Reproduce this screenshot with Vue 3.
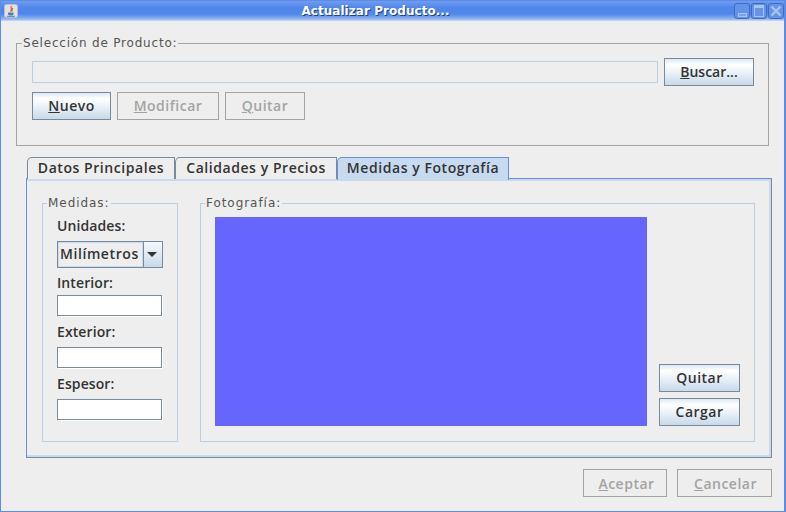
<template>
  <div class="window">
    <header class="titlebar">
      <span class="app-icon">
        <svg width="14" height="14" viewBox="0 0 14 14">
          <rect x="0.5" y="0.5" width="13" height="13" rx="2" fill="#e4e2de" stroke="#b5c0d8" />
          <path d="M7.5 2 C5.5 4 9 5 6.5 7.5 M9 4 C7.5 5 8.5 6 8 7.5" fill="none" stroke="#d9542b" stroke-width="1.1" />
          <path d="M4 8.5 H9.5 V10.5 Q9 11.5 7 11.5 Q4.5 11.5 4 10.5 Z" fill="#4d7ea8" />
          <path d="M3 12.3 H11" stroke="#4d7ea8" />
        </svg>
      </span>
      <h1>Actualizar Producto...</h1>
      <div class="window-buttons">
        <span class="win-btn"><i class="min"></i></span>
        <span class="win-btn"><i class="max"></i></span>
        <span class="win-btn">
          <svg width="12" height="12" viewBox="0 0 12 12">
            <path d="M1.5 1.5 L10.5 10.5 M10.5 1.5 L1.5 10.5" stroke="#a9c3f0" stroke-width="2.4" fill="none" />
          </svg>
        </span>
      </div>
    </header>

    <main class="content">
      <fieldset class="product-box">
        <legend>Selección de Producto:</legend>
        <div class="search-row">
          <div class="search-input"></div>
          <button type="button" class="btn search-btn"><u>B</u>uscar...</button>
        </div>
        <div class="action-row">
          <button type="button" class="btn nuevo"><u>N</u>uevo</button>
          <button type="button" class="btn disabled modificar"><u>M</u>odificar</button>
          <button type="button" class="btn disabled quitar"><u>Q</u>uitar</button>
        </div>
      </fieldset>

      <section class="tabs">
        <div class="tab-strip">
          <span
            v-for="tab in tabs"
            :key="tab.label"
            class="tab"
            :class="{ active: tab.active }"
            :style="{ width: tab.width + 'px' }"
          >
            {{ tab.label }}
          </span>
        </div>

        <div class="tab-panel">
          <fieldset class="inner-box measures">
            <legend>Medidas:</legend>
            <strong class="label first">Unidades:</strong>
            <div class="combo">
              <span class="combo-value">Milímetros</span>
              <span class="combo-arrow"></span>
            </div>
            <template v-for="field in fields" :key="field">
              <strong class="label">{{ field }}:</strong>
              <div class="text-input"></div>
            </template>
          </fieldset>

          <fieldset class="inner-box photo">
            <legend>Fotografía:</legend>
            <div class="photo-inner">
              <div class="picture"></div>
              <div class="photo-actions">
                <button type="button" class="btn photo-btn">Quitar</button>
                <button type="button" class="btn photo-btn">Cargar</button>
              </div>
            </div>
          </fieldset>
        </div>
      </section>

      <footer class="dialog-actions">
        <button type="button" class="btn disabled aceptar"><u>A</u>ceptar</button>
        <button type="button" class="btn disabled cancelar"><u>C</u>ancelar</button>
      </footer>
    </main>
  </div>
</template>

<script setup>
const tabs = [
  { label: 'Datos Principales', width: 148 },
  { label: 'Calidades y Precios', width: 162 },
  { label: 'Medidas y Fotografía', width: 172, active: true }
]

const fields = ['Interior', 'Exterior', 'Espesor']
</script>

<style>
html,
body {
  margin: 0;
  background: #eeeeee;
}
</style>

<style scoped>
.window {
  display: flex;
  flex-direction: column;
  box-sizing: border-box;
  width: 786px;
  height: 512px;
  overflow: hidden;
  background: #eeeeee;
  border: solid #5b8de8;
  border-width: 1px 2px 1px 1px;
  font-family: "Open Sans", sans-serif;
  color: #333333;
}

.titlebar {
  position: relative;
  display: flex;
  flex: none;
  align-items: center;
  justify-content: center;
  box-sizing: border-box;
  height: 20px;
  padding-right: 34px;
  background: linear-gradient(#6f9df0 0, #4f86ea 35%, #4f86ea 65%, #8fb4f2 90%, #cfdcf2 100%);
}

.titlebar h1 {
  margin: 0;
  color: #ffffff;
  font-family: "DejaVu Sans", sans-serif;
  font-size: 12px;
  font-weight: 700;
  letter-spacing: 0.05px;
  text-shadow: 1px 1px 0 #1f3f80;
}

.app-icon {
  position: absolute;
  top: 3px;
  left: 3px;
  display: flex;
}

.window-buttons {
  position: absolute;
  top: 2px;
  right: 0;
  display: flex;
  gap: 1px;
}

.win-btn {
  display: flex;
  align-items: center;
  justify-content: center;
  box-sizing: border-box;
  width: 16px;
  height: 16px;
  background: #6394ea;
  border: 1px solid #3f6cc0;
  border-radius: 3px;
}

.win-btn .min {
  width: 9px;
  height: 4px;
  margin-top: 7px;
  background: #7aa3ee;
  border: 1px solid #a9c3f0;
  box-sizing: border-box;
}

.win-btn .max {
  width: 10px;
  height: 12px;
  box-sizing: border-box;
  border: 1px solid #a9c3f0;
  border-top-width: 3px;
}

.content {
  display: flex;
  flex: 1;
  flex-direction: column;
  padding: 15px 0 0 15px;
}

fieldset {
  margin: 0;
  min-width: 0;
  box-sizing: border-box;
}

legend {
  padding: 0 1px;
  font-family: "DejaVu Sans", sans-serif;
  font-size: 12px;
  font-weight: 400;
  line-height: 14px;
  letter-spacing: 0.8px;
  color: #555555;
}

.product-box {
  width: 753px;
  height: 110px;
  padding: 8px 14px 0 15px;
  border: 1px solid #a3a3a3;
}

.product-box legend {
  margin-left: -10px;
}

.search-row {
  display: flex;
  align-items: center;
  gap: 6px;
}

.search-input {
  box-sizing: border-box;
  width: 626px;
  height: 22px;
  background: #eeeeee;
  border: 1px solid #b8cfe5;
}

.btn {
  display: block;
  box-sizing: border-box;
  height: 28px;
  padding: 0 0 2px;
  background: linear-gradient(#dde8f3 0, #ffffff 22%, #f2f6fa 42%, #c8d9ea 100%);
  border: 1px solid #7a8a99;
  color: #333333;
  font-family: inherit;
  font-size: 14px;
  font-weight: 600;
  letter-spacing: 0.5px;
  text-align: center;
}

.btn.disabled {
  background: #eeeeee;
  border-color: #a3a3a3;
  color: #a3a3a3;
}

.search-btn {
  width: 90px;
  letter-spacing: 0;
}

.action-row {
  display: flex;
  gap: 6px;
  margin-top: 6px;
}

.nuevo {
  width: 79px;
}

.modificar {
  width: 102px;
}

.quitar {
  width: 80px;
}

.tabs {
  margin: 11px 0 0 10px;
}

.tab-strip {
  position: relative;
  z-index: 1;
  display: flex;
  height: 21px;
  padding-left: 1px;
}

.tab {
  box-sizing: border-box;
  height: 22px;
  background: #eeeeee;
  border: 1px solid #7a8a99;
  border-bottom: 0;
  border-top-left-radius: 5px;
  font-size: 14px;
  font-weight: 600;
  line-height: 19px;
  letter-spacing: 0.56px;
  text-align: center;
}

.tab.active {
  height: 23px;
  background: #c8daf0;
  border-color: #6b8fd0;
}

.tab-panel {
  display: flex;
  gap: 22px;
  box-sizing: border-box;
  width: 746px;
  height: 280px;
  padding: 17px 0 0 15px;
  background: #eeeeee;
  border: 1px solid #6b8fd0;
  border-right-color: #7a8a99;
  border-bottom-color: #7a8a99;
  box-shadow: inset 0 2px 0 #c8daf0, inset -2px -2px 0 #c8daf0;
}

.inner-box {
  height: 246px;
  border: 1px solid #b8cfe5;
}

.inner-box legend {
  margin-left: -10px;
  letter-spacing: 0.95px;
}

.measures {
  width: 136px;
  padding: 0 14px;
}

.label {
  display: block;
  margin-top: 7px;
  font-size: 14px;
  font-weight: 600;
  line-height: 17px;
  letter-spacing: 0.1px;
}

.label.first {
  margin-top: 7px;
}

.combo {
  display: flex;
  box-sizing: border-box;
  width: 106px;
  height: 27px;
  margin-top: 7px;
  border: 1px solid #7a8a99;
}

.combo + .label {
  margin-top: 6px;
}

.combo + .label + .text-input {
  margin-top: 4px;
}

.combo-value {
  flex: 1;
  box-sizing: border-box;
  padding-left: 1px;
  border: 1px solid #c8daf0;
  font-size: 14px;
  font-weight: 600;
  line-height: 22px;
  letter-spacing: 0.58px;
}

.combo-arrow {
  position: relative;
  width: 18px;
  background: linear-gradient(#f6f9fc 0, #c8d9ea 100%);
  border-left: 1px solid #7a8a99;
}

.combo-arrow::after {
  content: '';
  position: absolute;
  top: 10px;
  left: 3px;
  border: 5px solid transparent;
  border-top: 5px solid #333333;
  border-bottom: 0;
}

.text-input {
  box-sizing: border-box;
  width: 105px;
  height: 21px;
  margin-top: 7px;
  background: #ffffff;
  border: 1px solid #7a8a99;
  box-shadow: 1px 1px 0 #ffffff;
}

.photo {
  width: 555px;
  padding: 0 14px 0 14px;
}

.photo-inner {
  display: flex;
  gap: 12px;
  margin-top: 7px;
}

.picture {
  width: 432px;
  height: 209px;
  background: #6666ff;
}

.photo-actions {
  display: flex;
  flex-direction: column;
  justify-content: flex-end;
  gap: 6px;
}

.photo-btn {
  width: 81px;
}

.dialog-actions {
  display: flex;
  justify-content: flex-end;
  gap: 10px;
  margin: 11px 12px 0 0;
}

.aceptar {
  width: 84px;
  padding: 0 0 0 3px;
}

.cancelar {
  width: 95px;
  padding: 0 0 0 2px;
}
</style>
